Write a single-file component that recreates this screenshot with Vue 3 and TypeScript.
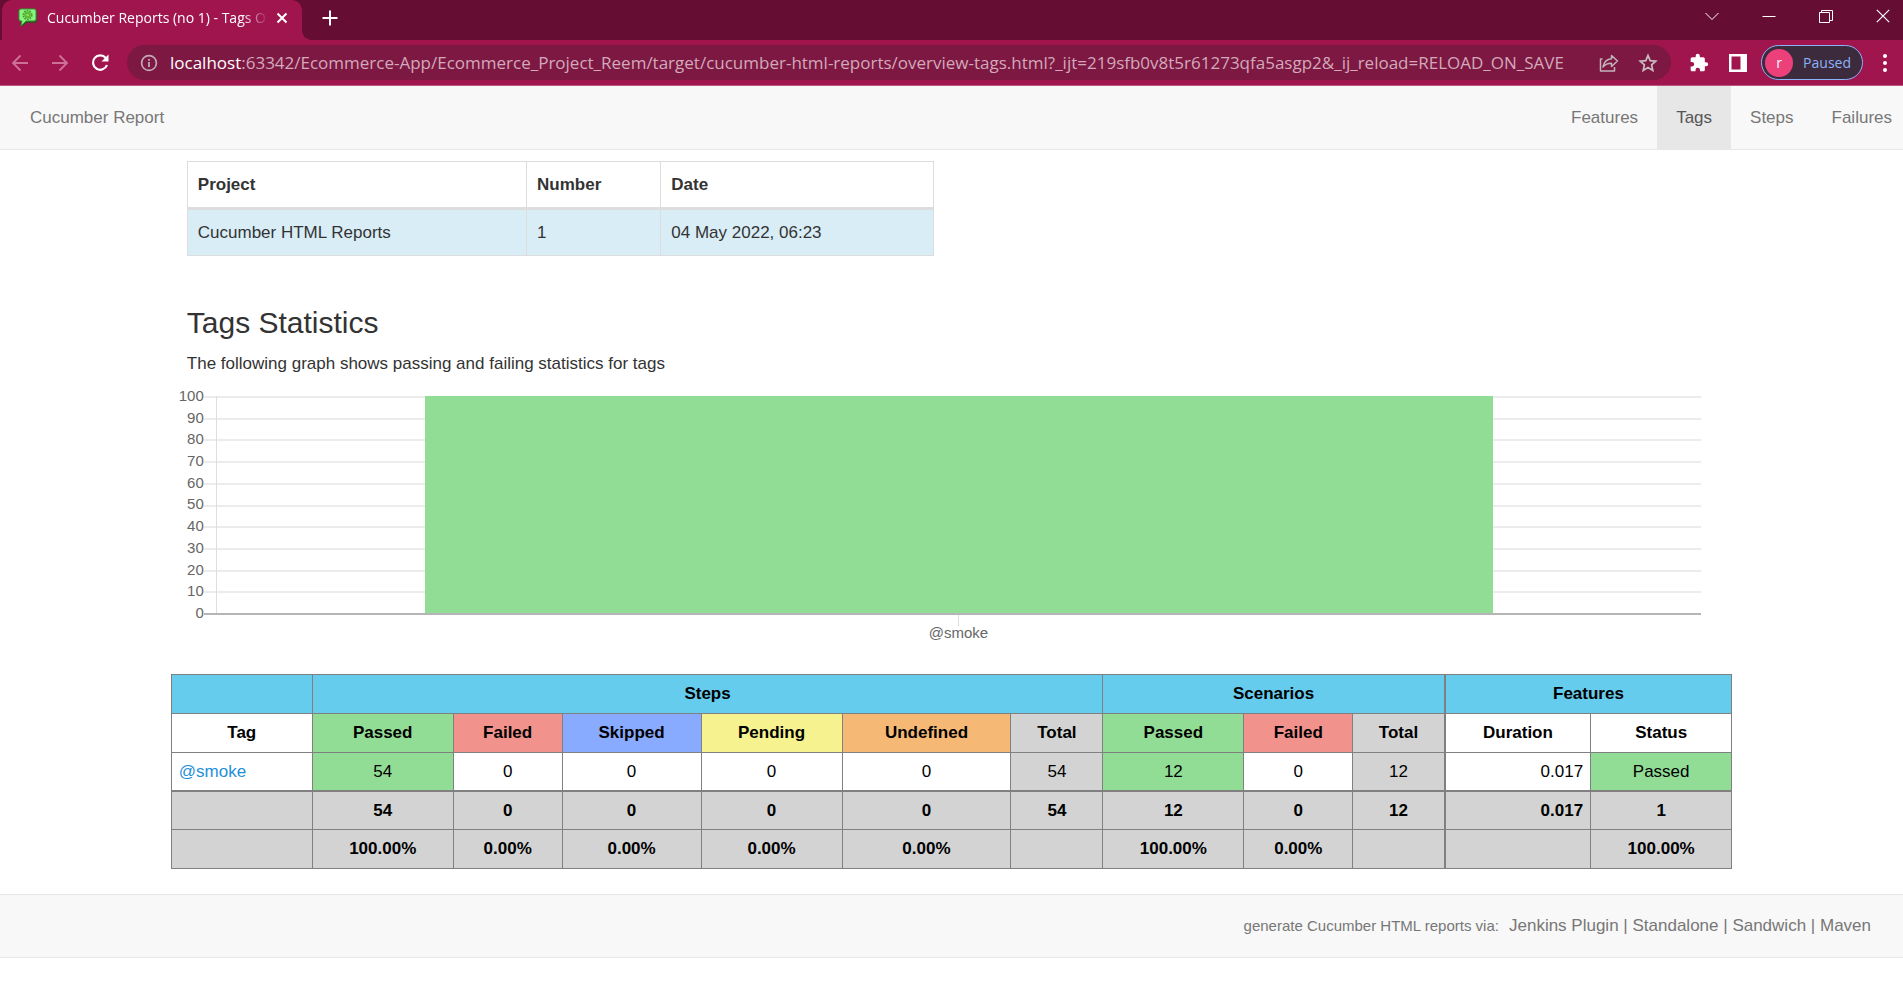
<script setup lang="ts">
interface Column {
  label: string
  width: number
  tone: string
  value: string
  total: string
  percent: string
}

const navItems: string[] = ['Features', 'Tags', 'Steps', 'Failures']
const activeItem = 'Tags'

const axisTicks: number[] = [100, 90, 80, 70, 60, 50, 40, 30, 20, 10, 0]
const passedRate = 100

const columns: Column[] = [
  { label: 'Passed', width: 141, tone: 'passed', value: '54', total: '54', percent: '100.00%' },
  { label: 'Failed', width: 109, tone: 'failed', value: '0', total: '0', percent: '0.00%' },
  { label: 'Skipped', width: 139, tone: 'skipped', value: '0', total: '0', percent: '0.00%' },
  { label: 'Pending', width: 141, tone: 'pending', value: '0', total: '0', percent: '0.00%' },
  { label: 'Undefined', width: 169, tone: 'undefined', value: '0', total: '0', percent: '0.00%' },
  { label: 'Total', width: 92, tone: 'total', value: '54', total: '54', percent: '' },
  { label: 'Passed', width: 141, tone: 'passed', value: '12', total: '12', percent: '100.00%' },
  { label: 'Failed', width: 109, tone: 'failed', value: '0', total: '0', percent: '0.00%' },
  { label: 'Total', width: 92, tone: 'total', value: '12', total: '12', percent: '' },
  { label: 'Duration', width: 146, tone: 'duration', value: '0.017', total: '0.017', percent: '' },
  { label: 'Status', width: 141, tone: 'status', value: 'Passed', total: '1', percent: '100.00%' },
]
const tagWidth = 141
const widthSum = columns.reduce((sum, c) => sum + c.width, tagWidth)
const share = (w: number): string => `${(w / widthSum) * 100}%`

// A coloured result cell is only highlighted when it holds a non-zero result.
const valueTone = (c: Column): string => {
  if (c.tone === 'status') return 'passed'
  if (c.tone === 'total' || c.tone === 'duration') return c.tone
  return c.value === '0' ? '' : c.tone
}

const footerLinks: string[] = ['Jenkins Plugin', 'Standalone', 'Sandwich', 'Maven']
</script>

<template>
  <div class="browser">
    <header class="chrome">
      <div class="tab-strip">
        <div class="tab">
          <svg class="favicon" width="20" height="20" viewBox="0 0 20 20" aria-hidden="true">
            <path d="M4 3h13q2 0 2 2v8q0 2-2 2H9l-5 4 1-4H4q-2 0-2-2V5q0-2 2-2z" fill="#3d4a22" />
            <path d="M3 1h13q2 0 2 2v8q0 2-2 2H8l-5 5 1-5H3q-2 0-2-2V3q0-2 2-2z" fill="#86f582" stroke="#2f9a2c" />
            <circle cx="9.500" cy="7" r="4.300" fill="none" stroke="#4d9c2c" stroke-width="1.600" stroke-dasharray="1.700 1" />
            <circle cx="9.500" cy="7" r="3.400" fill="#5cb834" />
            <circle cx="9.500" cy="7" r="1.300" fill="#8fe06a" />
          </svg>
          <span class="tab-title">Cucumber Reports (no 1) - Tags O</span>
          <button class="bare" type="button" aria-label="Close tab">
            <svg width="12" height="12" viewBox="0 0 12 12"><path d="M1.500 1.500l9 9m0-9l-9 9" stroke="#fff" stroke-width="2" /></svg>
          </button>
        </div>
        <button class="bare new-tab" type="button" aria-label="New tab">
          <svg width="16" height="16" viewBox="0 0 16 16"><path d="M8 .5v15M.5 8h15" stroke="#fff" stroke-width="2" /></svg>
        </button>
        <div class="window-buttons">
          <button class="bare" type="button" aria-label="Search tabs">
            <svg width="14" height="14" viewBox="0 0 14 14"><path d="M.5 4l6.500 6.500L13.500 4" fill="none" stroke="#fff" stroke-width="1" /></svg>
          </button>
          <button class="bare" type="button" aria-label="Minimize">
            <svg width="14" height="14" viewBox="0 0 14 14"><path d="M.5 7.500h13" stroke="#fff" /></svg>
          </button>
          <button class="bare" type="button" aria-label="Restore">
            <svg width="14" height="14" viewBox="0 0 14 14"><path d="M.5 3.500h10v10H.5zM2.500 3.500v-2h11v10h-3" fill="none" stroke="#fff" /></svg>
          </button>
          <button class="bare" type="button" aria-label="Close window">
            <svg width="14" height="14" viewBox="0 0 14 14"><path d="M.8.8l12.400 12.400m0-12.400L.8 13.200" stroke="#fff" stroke-width="1.200" /></svg>
          </button>
        </div>
      </div>

      <div class="toolbar">
        <button class="bare nav-button" type="button" aria-label="Back">
          <svg width="18" height="18" viewBox="0 0 18 18"><path d="M17 9H2m7.500-7.500L2 9l7.500 7.500" fill="none" stroke="#cc7299" stroke-width="1.800" /></svg>
        </button>
        <button class="bare nav-button" type="button" aria-label="Forward">
          <svg width="18" height="18" viewBox="0 0 18 18"><path d="M1 9h15M8.500 1.500L16 9l-7.500 7.500" fill="none" stroke="#cc7299" stroke-width="1.800" /></svg>
        </button>
        <button class="bare nav-button" type="button" aria-label="Reload">
          <svg width="20" height="20" viewBox="0 0 20 20"><path d="M15.800 5A7.200 7.200 0 1 0 17 12" fill="none" stroke="#fff" stroke-width="2.200" /><path d="M18.500 1.500v7h-7z" fill="#fff" /></svg>
        </button>
        <div class="address">
          <svg width="18" height="18" viewBox="0 0 18 18" aria-hidden="true"><circle cx="9" cy="9" r="7.400" fill="none" stroke="#c3a9b6" stroke-width="1.700" /><path d="M9 8v5M9 5v1.800" stroke="#c3a9b6" stroke-width="1.800" /></svg>
          <a class="url" href="#"><span class="host">localhost</span>:63342/Ecommerce-App/Ecommerce_Project_Reem/target/cucumber-html-reports/overview-tags.html?_ijt=219sfb0v8t5r61273qfa5asgp2&amp;_ij_reload=RELOAD_ON_SAVE</a>
          <button class="bare" type="button" aria-label="Share">
            <svg width="20" height="20" viewBox="0 0 20 20"><path d="M3.500 6H1.500v12h14v-4M12.500 2.500L18.500 8l-6 5.500V10.300c-4 0-6.500 1.200-8.500 3.700.8-4.500 3.500-7.800 8.500-8.300z" fill="none" stroke="#c3b3bb" stroke-width="1.500" stroke-linejoin="round" /></svg>
          </button>
          <button class="bare" type="button" aria-label="Bookmark">
            <svg width="20" height="20" viewBox="0 0 20 20"><path d="M10 2.500l2.200 5.200 5.600.5-4.200 3.700 1.200 5.500L10 14.500l-4.800 2.900 1.200-5.500-4.200-3.700 5.600-.5z" fill="none" stroke="#c9bcc2" stroke-width="1.700" /></svg>
          </button>
        </div>
        <button class="bare" type="button" aria-label="Extensions">
          <svg width="20" height="20" viewBox="0 0 24 24"><path d="M20.500 11H19V7c0-1.100-.9-2-2-2h-4V3.500a2.500 2.500 0 0 0-5 0V5H4c-1.100 0-2 .9-2 2v3.800h1.500a2.700 2.700 0 0 1 0 5.400H2V20c0 1.100.9 2 2 2h3.800v-1.500a2.700 2.700 0 0 1 5.400 0V22H17c1.100 0 2-.9 2-2v-4h1.500a2.500 2.500 0 0 0 0-5z" fill="#fff" /></svg>
        </button>
        <button class="bare" type="button" aria-label="Side panel">
          <svg width="18" height="18" viewBox="0 0 18 18"><path fill-rule="evenodd" d="M0 0h18v18H0zM2.500 2.500v13h9v-13z" fill="#fff" /></svg>
        </button>
        <button class="profile" type="button"><span class="avatar">r</span><span>Paused</span></button>
        <button class="bare" type="button" aria-label="Menu">
          <svg width="4" height="18" viewBox="0 0 4 18"><g fill="#fff"><circle cx="2" cy="2" r="2" /><circle cx="2" cy="9" r="2" /><circle cx="2" cy="16" r="2" /></g></svg>
        </button>
      </div>
    </header>

    <nav class="navbar">
      <span class="brand">Cucumber Report</span>
      <ul>
        <li v-for="item in navItems" :key="item">
          <a href="#" :class="{ active: item === activeItem }">{{ item }}</a>
        </li>
      </ul>
    </nav>

    <main class="content">
      <table class="build-info">
        <thead>
          <tr><th class="project">Project</th><th class="number">Number</th><th>Date</th></tr>
        </thead>
        <tbody>
          <tr><td>Cucumber HTML Reports</td><td>1</td><td>04 May 2022, 06:23</td></tr>
        </tbody>
      </table>

      <h2>Tags Statistics</h2>
      <p class="lead">The following graph shows passing and failing statistics for tags</p>

      <figure class="chart">
        <div class="y-axis">
          <span v-for="tick in axisTicks" :key="tick">{{ tick }}</span>
        </div>
        <div class="plot-column">
          <div class="plot">
            <i v-for="tick in axisTicks.slice(1)" :key="tick" class="grid-row"></i>
            <div class="bar-area">
              <div class="bar" :style="{ height: passedRate + '%' }"></div>
            </div>
          </div>
          <figcaption>@smoke</figcaption>
        </div>
      </figure>

      <table class="stats">
        <colgroup>
          <col :style="{ width: share(tagWidth) }" />
          <col v-for="(c, i) in columns" :key="i" :style="{ width: share(c.width) }" />
        </colgroup>
        <thead>
          <tr class="groups">
            <th></th>
            <th colspan="6">Steps</th>
            <th colspan="3">Scenarios</th>
            <th colspan="2" class="split">Features</th>
          </tr>
          <tr>
            <th>Tag</th>
            <th v-for="(c, i) in columns" :key="i" :class="[c.tone, { split: c.tone === 'duration' }]">{{ c.label }}</th>
          </tr>
        </thead>
        <tbody>
          <tr>
            <td class="tag"><a href="#">@smoke</a></td>
            <td v-for="(c, i) in columns" :key="i" :class="[valueTone(c), { split: c.tone === 'duration' }]">{{ c.value }}</td>
          </tr>
        </tbody>
        <tfoot>
          <tr>
            <td></td>
            <td v-for="(c, i) in columns" :key="i" :class="{ duration: c.tone === 'duration', split: c.tone === 'duration' }">{{ c.total }}</td>
          </tr>
          <tr>
            <td></td>
            <td v-for="(c, i) in columns" :key="i" :class="{ split: c.tone === 'duration' }">{{ c.percent }}</td>
          </tr>
        </tfoot>
      </table>
    </main>

    <footer class="footer">
      <small>generate Cucumber HTML reports via:</small>
      <span>
        <template v-for="(link, i) in footerLinks" :key="link"><template v-if="i > 0"> | </template><a href="#">{{ link }}</a></template>
      </span>
    </footer>
  </div>
</template>

<style>
body {
  margin: 0;
  background: #fff;
}
</style>

<style scoped>
.browser {
  font-family: "Liberation Sans", Arial, sans-serif;
  font-size: 17px;
  line-height: 24px;
  color: #333;
}

a {
  color: inherit;
  text-decoration: none;
}

.bare {
  display: flex;
  flex: none;
  align-items: center;
  justify-content: center;
  padding: 0;
  border: 0;
  background: none;
}

.chrome {
  font-family: "Open Sans", "Noto Sans", sans-serif;
  color: #fff;
}

.tab-strip {
  display: flex;
  align-items: stretch;
  height: 40px;
  background: #650d32;
}

.tab {
  position: relative;
  display: flex;
  align-items: center;
  box-sizing: border-box;
  width: 300px;
  margin-left: 2px;
  padding: 0 14px 4px 16px;
  border-radius: 10px 10px 0 0;
  background: #a1154f;
}

/* Concave foot where the active tab meets the toolbar. */
.tab::after {
  content: "";
  position: absolute;
  bottom: 0;
  left: 100%;
  width: 10px;
  height: 10px;
  background: radial-gradient(circle at top right, transparent 10px, #a1154f 10px);
}

.favicon {
  flex: none;
}

.tab-title {
  flex: 1;
  margin: 0 8px 0 9px;
  font-size: 14px;
  white-space: nowrap;
  -webkit-mask-image: linear-gradient(to right, #000 88%, transparent);
  mask-image: linear-gradient(to right, #000 88%, transparent);
}

.new-tab {
  margin: 0 0 4px 20px;
}

.window-buttons {
  display: flex;
  gap: 43px;
  margin: 0 13px 9px auto;
}

.toolbar {
  display: flex;
  align-items: center;
  gap: 20px;
  height: 45px;
  padding: 0 16px 0 10px;
  border-bottom: 1px solid #bb5681;
  background: #a1154f;
}

.nav-button {
  width: 20px;
}

.address {
  display: flex;
  flex: 1;
  align-items: center;
  gap: 12px;
  min-width: 0;
  height: 35px;
  margin: 0 -2px 0 -3px;
  padding: 0 13px;
  border-radius: 18px;
  background: #7d1842;
}

.url {
  flex: 1;
  min-width: 0;
  overflow: hidden;
  font-size: 17px;
  color: #d3a9bb;
  white-space: nowrap;
}

.host {
  color: #fff;
}

.address .bare + .bare {
  margin-left: 7px;
}

.profile {
  display: flex;
  align-items: center;
  gap: 10px;
  box-sizing: border-box;
  height: 35px;
  margin: 0 0 0 -6px;
  padding: 0 11px 0 3px;
  border: 1px solid #8ab4f8;
  border-radius: 18px;
  background: #3c2a3d;
  font: 14px/24px "Open Sans", "Noto Sans", sans-serif;
  color: #8ab4f8;
}

.avatar {
  width: 28px;
  border-radius: 14px;
  background: #ec407a;
  line-height: 28px;
  color: #fff;
}

.navbar {
  display: flex;
  justify-content: space-between;
  border-bottom: 1px solid #e7e7e7;
  background: #f8f8f8;
  color: #777;
}

.brand {
  padding: 20px 30px 19px;
}

.navbar ul {
  display: flex;
  margin: 0;
  padding: 0;
  list-style: none;
}

.navbar li a {
  display: block;
  padding: 20px 19px 19px;
}

.navbar li:last-child a {
  padding-right: 11px;
}

.navbar .active {
  background: #e7e7e7;
  color: #555;
}

.content {
  width: 82.05%;
  margin: 0 auto;
  padding: 11px 0 25px;
}

.build-info {
  width: calc(50% - 34px);
  margin-left: 16px;
  border-collapse: collapse;
  table-layout: fixed;
}

.build-info th,
.build-info td {
  box-sizing: border-box;
  padding: 11px 10px;
  border: 1px solid #ddd;
  line-height: 23px;
  text-align: left;
}

.build-info th {
  border-bottom-width: 3px;
}

.build-info td {
  background: #d9edf7;
}

.project {
  width: 45.5%;
}

.number {
  width: 18%;
}

h2 {
  margin: 49px 16px 11px;
  font-size: 30px;
  font-weight: 400;
  line-height: 36px;
}

.lead {
  margin: 0 16px;
}

.chart {
  display: flex;
  margin: 10px 31px 31px 0;
  font-size: 15px;
  line-height: 20px;
  color: #666;
}

.y-axis {
  display: flex;
  flex-direction: column;
  justify-content: space-between;
  width: 33px;
  height: 237px;
  text-align: right;
}

.plot-column {
  flex: 1;
}

.plot {
  position: relative;
  display: flex;
  flex-direction: column;
  height: 217px;
  margin-top: 10px;
  border-bottom: 2px solid #b5b5b5;
}

.grid-row {
  flex: 1;
  border-top: 2px solid #ececec;
}

.bar-area {
  position: absolute;
  inset: 0 0 0 12px;
  display: flex;
  align-items: flex-end;
  justify-content: center;
  border-left: 1px solid #dedede;
}

.bar {
  width: 72%;
  background: #92dd96;
}

figcaption {
  margin-left: 12px;
  padding-top: 8px;
  background: linear-gradient(#dedede, #dedede) center top / 1px 11px no-repeat;
  text-align: center;
}

.stats {
  width: 100%;
  border-collapse: collapse;
  table-layout: fixed;
  color: #000;
}

.stats th,
.stats td {
  height: 38px;
  padding: 0 7px;
  border: 1px solid gray;
  text-align: center;
}

.stats .groups th {
  background: #66ccee;
}

.stats .split {
  border-left-width: 2px;
}

.stats .tag {
  text-align: left;
  color: #1e90d8;
}

.stats .passed {
  background: #92dd96;
}

.stats .failed {
  background: #f2928c;
}

.stats .skipped {
  background: #88aaff;
}

.stats .pending {
  background: #f5f28f;
}

.stats .undefined {
  background: #f5b975;
}

.stats .total,
.stats tfoot td {
  background: #d3d3d3;
}

.stats tfoot td {
  font-weight: 700;
}

.stats tbody td,
.stats tfoot tr:first-child td {
  height: 37px;
}

.stats tfoot tr:first-child td {
  border-top-width: 2px;
}

.stats td.duration {
  text-align: right;
}

.footer {
  display: flex;
  align-items: baseline;
  justify-content: flex-end;
  gap: 10px;
  padding: 19px 32px;
  border: solid #e7e7e7;
  border-width: 1px 0;
  background: #f8f8f8;
  color: #777;
}

.footer small {
  font-size: 15px;
}
</style>
